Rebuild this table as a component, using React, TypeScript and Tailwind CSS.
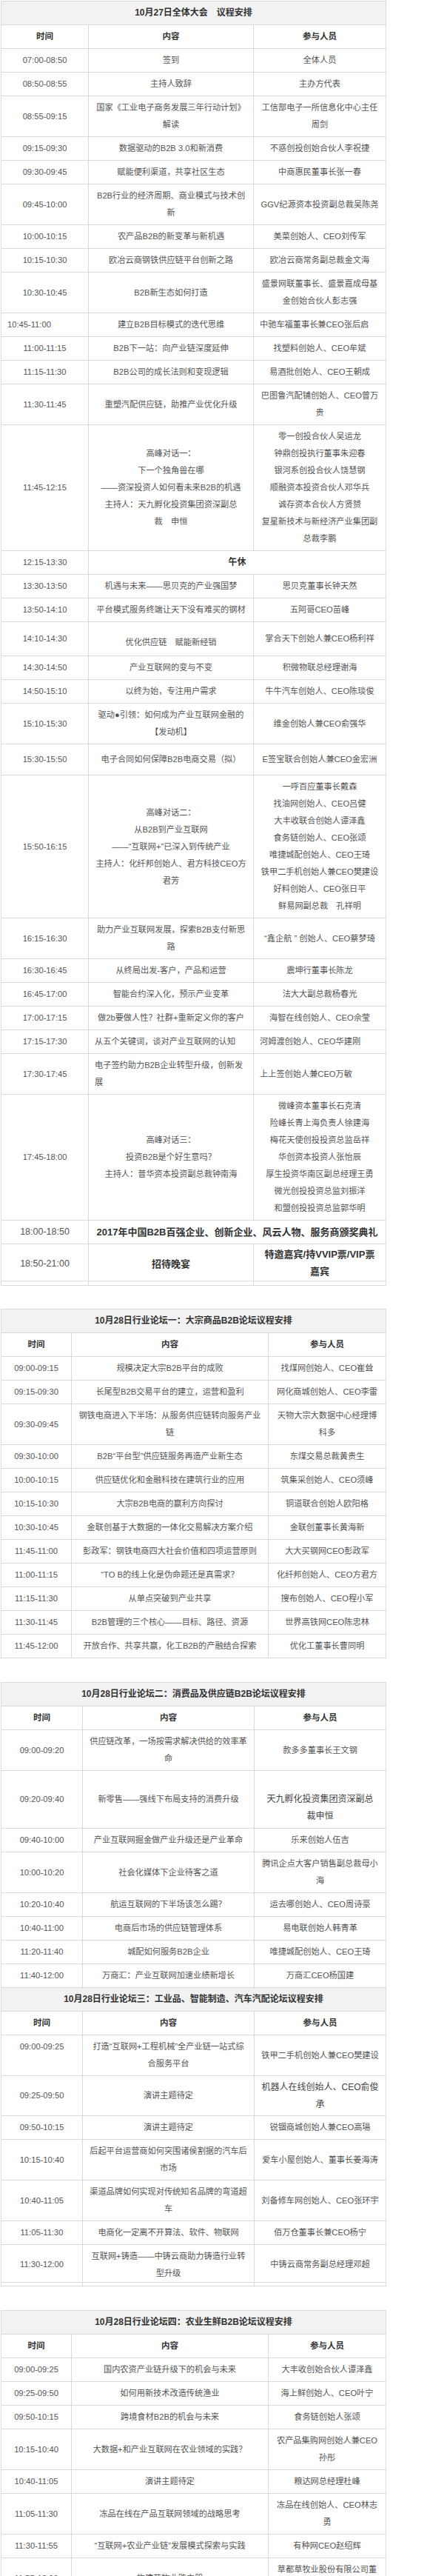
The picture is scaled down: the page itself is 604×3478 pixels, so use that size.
import React from "react";

type Row = {
  t: string;
  c: string[];
  p?: string[];
  h?: string;
  span?: boolean;
  tCls?: string;
  cCls?: string;
  pCls?: string;
};

type Section = { title: string; rows: Row[] };

const CENTER = "justify-center items-center text-center py-1";
const LEFT = "justify-center items-start text-left py-1";
const TXT = "text-[11.2px] leading-[23px] text-[#555]";
const BOLD13 = "text-[13px] leading-[23px] font-bold text-[#333]";

const T1: Row[] = [
  { t: "07:00-08:50", c: ["签到"], p: ["全体人员"] },
  { t: "08:50-08:55", c: ["主持人致辞"], p: ["主办方代表"] },
  { t: "08:55-09:15", c: ["国家《工业电子商务发展三年行动计划》", "解读"], p: ["工信部电子一所信息化中心主任", "周剑"] },
  { t: "09:15-09:30", c: ["数据驱动的B2B 3.0和新消费"], p: ["不惑创投创始合伙人李祝捷"] },
  { t: "09:30-09:45", c: ["赋能便利渠道，共享社区生态"], p: ["中商惠民董事长张一春"] },
  { t: "09:45-10:00", c: ["B2B行业的经济周期、商业模式与技术创", "新"], p: ["GGV纪源资本投资副总裁吴陈尧"] },
  { t: "10:00-10:15", c: ["农产品B2B的新变革与新机遇"], p: ["美菜创始人、CEO刘传军"] },
  { t: "10:15-10:30", c: ["欧冶云商钢铁供应链平台创新之路"], p: ["欧冶云商常务副总裁金文海"] },
  { t: "10:30-10:45", c: ["B2B新生态如何打造"], p: ["盛景网联董事长、盛景嘉成母基", "金创始合伙人彭志强"] },
  { t: "10:45-11:00", c: ["建立B2B目标模式的迭代思维"], p: ["中驰车福董事长兼CEO张后启"], tCls: LEFT, pCls: LEFT },
  { t: "11:00-11:15", c: ["B2B下一站：向产业链深度延伸"], p: ["找塑料创始人、CEO牟斌"] },
  { t: "11:15-11:30", c: ["B2B公司的成长法则和变现逻辑"], p: ["易酒批创始人、CEO王朝成"] },
  { t: "11:30-11:45", c: ["重塑汽配供应链，助推产业优化升级"], p: ["巴图鲁汽配铺创始人、CEO曾万", "贵"] },
  {
    t: "11:45-12:15",
    c: ["高峰对话一：", "下一个独角兽在哪", "——资深投资人如何看未来B2B的机遇", "主持人：天九孵化投资集团资深副总", "裁　申恒"],
    p: ["零一创投合伙人吴运龙", "钟鼎创投执行董事朱迎春", "银河系创投合伙人饶慧钢", "顺融资本投资合伙人邓华兵", "诚存资本合伙人方贤赟", "复星新技术与新经济产业集团副", "总裁李鹏"],
  },
  { t: "12:15-13:30", c: ["午休"], span: true, cCls: CENTER + " text-[12px] leading-[23px] font-bold text-[#333]" },
  { t: "13:30-13:50", c: ["机遇与未来——思贝克的产业强国梦"], p: ["思贝克董事长钟天然"] },
  { t: "13:50-14:10", c: ["平台模式服务终端让天下没有难买的钢材"], p: ["五阿哥CEO苗峰"] },
  { t: "14:10-14:30", c: ["优化供应链　赋能新经销"], p: ["掌合天下创始人兼CEO杨利祥"], h: "h-[46px]", cCls: "justify-start items-center text-center pt-[16px]" },
  { t: "14:30-14:50", c: ["产业互联网的变与不变"], p: ["积微物联总经理谢海"] },
  { t: "14:50-15:10", c: ["以终为始，专注用户需求"], p: ["牛牛汽车创始人、CEO陈琰俊"] },
  { t: "15:10-15:30", c: ["驱动●引领：如何成为产业互联网金融的", "【发动机】"], p: ["维金创始人兼CEO俞强华"] },
  { t: "15:30-15:50", c: ["电子合同如何保障B2B电商交易（拟）"], p: ["E签宝联合创始人兼CEO金宏洲"], h: "h-[42px]" },
  {
    t: "15:50-16:15",
    c: ["高峰对话二：", "从B2B到产业互联网", "——“互联网+”已深入到传统产业", "主持人：化纤邦创始人、君方科技CEO方", "君芳"],
    p: ["一呼百应董事长戴森", "找油网创始人、CEO吕健", "大丰收联合创始人谭泽鑫", "食务链创始人、CEO张颂", "唯捷城配创始人、CEO王琦", "铁甲二手机创始人兼CEO樊建设", "好料创始人、CEO张日平", "鲜易网副总裁　孔祥明"],
  },
  { t: "16:15-16:30", c: ["助力产业互联网发展，探索B2B支付新思", "路"], p: ["“鑫企航 ” 创始人、CEO蔡梦琦"] },
  { t: "16:30-16:45", c: ["从终局出发-客户，产品和运营"], p: ["震坤行董事长陈龙"] },
  { t: "16:45-17:00", c: ["智能合约深入化，预示产业变革"], p: ["法大大副总裁杨春光"] },
  { t: "17:00-17:15", c: ["做2b要做人性？社群+重新定义你的客户"], p: ["海智在线创始人、CEO佘莹"] },
  { t: "17:15-17:30", c: ["从五个关键词，谈对产业互联网的认知"], p: ["河姆渡创始人、CEO华建刚"], cCls: LEFT, pCls: LEFT },
  { t: "17:30-17:45", c: ["电子签约助力B2B企业转型升级，创新发", "展"], p: ["上上签创始人兼CEO万敏"], cCls: LEFT, pCls: LEFT },
  {
    t: "17:45-18:00",
    c: ["高峰对话三：", "投资B2B是个好生意吗？", "主持人：普华资本投资副总裁钟南海"],
    p: ["微峰资本董事长石克清", "险峰长青上海负责人徐建海", "梅花天使创投投资总监岳祥", "华创资本投资人张怡辰", "厚生投资华南区副总经理王勇", "微光创投投资总监刘振洋", "和盟创投投资总监郭华明"],
  },
  {
    t: "18:00-18:50",
    c: ["2017年中国B2B百强企业、创新企业、风云人物、服务商颁奖典礼"],
    span: true,
    tCls: CENTER + " text-[12.5px] leading-[23px] text-[#555]",
    cCls: CENTER + " " + BOLD13,
  },
  {
    t: "18:50-21:00",
    c: ["招待晚宴"],
    p: ["特邀嘉宾/持VVIP票/VIP票", "嘉宾"],
    h: "h-[50px]",
    tCls: "justify-center items-center text-center pt-[3px] text-[12.5px] leading-[23px] text-[#555]",
    cCls: "justify-center items-center text-center pt-[3px] " + BOLD13,
    pCls: "justify-center items-center text-center pt-[3px] text-[13px] leading-[22.7px] font-bold text-[#333]",
  },
  { t: "", c: [""], p: [""], h: "h-[6px]", tCls: "py-0", cCls: "py-0", pCls: "py-0" },
];

const T2: Row[] = [
  { t: "09:00-09:15", c: ["规模决定大宗B2B平台的成败"], p: ["找煤网创始人、CEO崔耸"] },
  { t: "09:15-09:30", c: ["长尾型B2B交易平台的建立，运营和盈利"], p: ["网化商城创始人、CEO李雷"] },
  { t: "09:30-09:45", c: ["钢铁电商进入下半场：从服务供应链转向服务产业", "链"], p: ["天物大宗大数据中心经理博", "科多"] },
  { t: "09:30-10:00", c: ["B2B“平台型”供应链服务再造产业新生态"], p: ["东煤交易总裁黄贵生"] },
  { t: "10:00-10:15", c: ["供应链优化和金融科技在建筑行业的应用"], p: ["筑集采创始人、CEO须峰"] },
  { t: "10:15-10:30", c: ["大宗B2B电商的赢利方向探讨"], p: ["铜道联合创始人欧阳格"] },
  { t: "10:30-10:45", c: ["金联创基于大数据的一体化交易解决方案介绍"], p: ["金联创董事长黄海新"] },
  { t: "11:45-11:00", c: ["彭政军：钢铁电商四大社会价值和四项运营原则"], p: ["大大买钢网CEO彭政军"] },
  { t: "11:00-11:15", c: ["“TO B的线上化是伪命题还是真需求？"], p: ["化纤邦创始人、CEO方君方"] },
  { t: "11:15-11:30", c: ["从单点突破到产业共享"], p: ["搜布创始人、CEO程小军"] },
  { t: "11:30-11:45", c: ["B2B管理的三个核心——目标、路径、资源"], p: ["世界高铁网CEO陈忠林"] },
  { t: "11:45-12:00", c: ["开放合作、共享共赢，化工B2B的产融结合探索"], p: ["优化工董事长曹同明"] },
];

const T3: Row[] = [
  { t: "09:00-09:20", c: ["供应链改革，一场按需求解决供给的效率革", "命"], p: ["款多多董事长王文钢"] },
  {
    t: "09:20-09:40",
    c: ["新零售——强线下布局支持的消费升级"],
    p: ["天九孵化投资集团资深副总", "裁申恒"],
    h: "h-[78px]",
    pCls: "justify-start items-center text-center pt-[27px] text-[12px] leading-[22.5px] text-[#444]",
  },
  { t: "09:40-10:00", c: ["产业互联网掘金做产业升级还是产业革命"], p: ["乐来创始人伍吉"] },
  { t: "10:00-10:20", c: ["社会化媒体下企业待客之道"], p: ["腾讯企点大客户销售副总裁母小", "海"] },
  { t: "10:20-10:40", c: ["航运互联网的下半场该怎么踢？"], p: ["运去哪创始人、CEO周诗豪"] },
  { t: "10:40-11:00", c: ["电商后市场的供应链管理体系"], p: ["易电联创始人韩青革"] },
  { t: "11:20-11:40", c: ["城配如何服务B2B企业"], p: ["唯捷城配创始人、CEO王琦"] },
  { t: "11:40-12:00", c: ["万商汇：产业互联网加速业绩新增长"], p: ["万商汇CEO杨国建"] },
];

const T4: Row[] = [
  {
    t: "09:00-09:25",
    c: ["打造“互联网+工程机械”全产业链一站式综", "合服务平台"],
    p: ["铁甲二手机创始人兼CEO樊建设"],
    tCls: "justify-start items-center text-center py-1",
  },
  {
    t: "09:25-09:50",
    c: ["演讲主题待定"],
    p: ["机器人在线创始人、CEO俞俊", "承"],
    pCls: CENTER + " text-[12px] leading-[22.7px] text-[#444]",
  },
  { t: "09:50-10:15", c: ["演讲主题待定"], p: ["锐锢商城创始人兼CEO高瑒"] },
  { t: "10:15-10:40", c: ["后起平台运营商如何突围诸侯割据的汽车后", "市场"], p: ["爱车小屋创始人、董事长姜海涛"] },
  { t: "10:40-11:05", c: ["渠道品牌如何实现对传统知名品牌的弯道超", "车"], p: ["刘备修车网创始人、CEO张环宇"] },
  { t: "11:05-11:30", c: ["电商化一定离不开算法、软件、物联网"], p: ["佰万仓董事长兼CEO杨宁"] },
  {
    t: "11:30-12:00",
    c: ["互联网+铸造——中铸云商助力铸造行业转", "型升级"],
    p: ["中铸云商常务副总经理邓超"],
    h: "h-[51px]",
    tCls: "justify-center items-center text-center pt-[3px]",
    cCls: "justify-center items-center text-center pt-[3px]",
    pCls: "justify-center items-center text-center pt-[3px]",
  },
  { t: "", c: [""], p: [""], h: "h-[5px]", tCls: "py-0", cCls: "py-0", pCls: "py-0" },
];

const T5: Row[] = [
  { t: "09:00-09:25", c: ["国内农资产业链升级下的机会与未来"], p: ["大丰收创始合伙人谭泽鑫"] },
  { t: "09:25-09:50", c: ["如何用新技术改造传统渔业"], p: ["海上鲜创始人、CEO叶宁"] },
  { t: "09:50-10:15", c: ["跨境食材B2B的机会与未来"], p: ["食务链创始人张颂"] },
  { t: "10:15-10:40", c: ["大数据+和产业互联网在农业领域的实践？"], p: ["农产品集购网创始人兼CEO", "孙彤"] },
  { t: "10:40-11:05", c: ["演讲主题待定"], p: ["粮达网总经理杜峰"] },
  { t: "11:05-11:30", c: ["冻品在线在产品互联网领域的战略思考"], p: ["冻品在线创始人、CEO林志", "勇"] },
  { t: "11:30-11:55", c: ["“互联网+农业产业链”发展模式探索与实践"], p: ["有种网CEO赵绍辉"] },
  { t: "11:55-12:00", c: ["构建草牧业路由器"], p: ["草都草牧业股份有限公司董", "事长王召明"] },
];

function Lines({ lines }: { lines: string[] }) {
  return (
    <>
      {lines.map((l, i) => (
        <div key={i} className="whitespace-nowrap">
          {l === "" ? "\u00a0" : l}
        </div>
      ))}
    </>
  );
}

function Cell({ lines, cls, span }: { lines: string[]; cls?: string; span?: boolean }) {
  const hasText = /text-\[/.test(cls ?? "");
  return (
    <div
      className={`flex min-w-0 flex-col overflow-visible px-2 ${span ? "col-span-2" : ""} ${cls ?? CENTER} ${
        hasText ? "" : TXT
      }`}
    >
      {lines.length === 1 && lines[0] === "" ? null : <Lines lines={lines} />}
    </div>
  );
}

function AgendaRow({ row, cols }: { row: Row; cols: string }) {
  return (
    <div className={`grid ${cols} divide-x divide-[#dadada] border-b border-[#dadada] ${row.h ?? ""}`}>
      <Cell lines={[row.t]} cls={row.tCls} />
      <Cell lines={row.c} cls={row.cCls} span={row.span} />
      {!row.span && <Cell lines={row.p ?? [""]} cls={row.pCls} />}
    </div>
  );
}

function HeaderRow({ cols }: { cols: string }) {
  const h = "flex items-center justify-center py-1 text-[11.5px] leading-[23px] font-bold text-[#333]";
  return (
    <div className={`grid ${cols} divide-x divide-[#dadada] border-b border-[#dadada]`}>
      <div className={h}>时间</div>
      <div className={h}>内容</div>
      <div className={h}>参与人员</div>
    </div>
  );
}

function TitleRow({ title }: { title: string }) {
  return (
    <div className="border-b border-[#dadada] bg-[#f2f2f2] py-1 text-center text-[12px] leading-[23px] font-bold text-[#333]">
      {title}
    </div>
  );
}

function AgendaTable({ cols, sections, cls }: { cols: string; sections: Section[]; cls?: string }) {
  return (
    <div className={`ml-px w-[521px] border-x border-t border-[#dadada] ${cls ?? ""}`}>
      {sections.map((s, si) => (
        <div key={si}>
          <TitleRow title={s.title} />
          <HeaderRow cols={cols} />
          {s.rows.map((r, ri) => (
            <AgendaRow key={ri} row={r} cols={cols} />
          ))}
        </div>
      ))}
    </div>
  );
}

export default function App() {
  return (
    <div className="min-h-[3478px] w-[604px] bg-white pt-px font-['Liberation_Sans','Noto_Sans_CJK_SC',sans-serif]">
      <AgendaTable
        cols="grid-cols-[118px_223px_178px]"
        sections={[{ title: "10月27日全体大会　议程安排", rows: T1 }]}
      />
      <AgendaTable
        cls="mt-[31px]"
        cols="grid-cols-[95px_266px_158px]"
        sections={[{ title: "10月28日行业论坛一：大宗商品B2B论坛议程安排", rows: T2 }]}
      />
      <AgendaTable
        cls="mt-[32px]"
        cols="grid-cols-[110px_232px_177px]"
        sections={[
          { title: "10月28日行业论坛二：消费品及供应链B2B论坛议程安排", rows: T3 },
          { title: "10月28日行业论坛三：工业品、智能制造、汽车汽配论坛议程安排", rows: T4 },
        ]}
      />
      <AgendaTable
        cls="mt-[32px]"
        cols="grid-cols-[95px_266px_158px]"
        sections={[{ title: "10月28日行业论坛四：农业生鲜B2B论坛议程安排", rows: T5 }]}
      />
    </div>
  );
}
